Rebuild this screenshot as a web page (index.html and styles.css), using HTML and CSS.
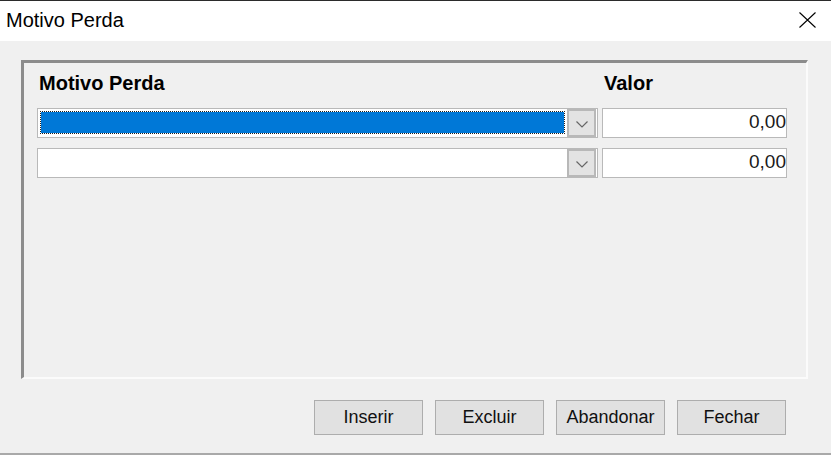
FILE: index.html
```html
<!DOCTYPE html>
<html lang="pt">
<head>
<meta charset="utf-8">
<title>Motivo Perda</title>
<link rel="stylesheet" href="styles.css">
</head>
<body>
<div class="window">
  <div class="titlebar">
    <span class="title">Motivo Perda</span>
    <svg class="close" width="17" height="16" viewBox="0 0 17 16" aria-hidden="true">
      <path d="M0.5 0.5 L16.5 15.5 M16.5 0.5 L0.5 15.5" stroke="#000" stroke-width="1.1" fill="none"/>
    </svg>
  </div>
  <div class="content">
    <div class="panel">
      <div class="grid head">
        <div class="hcell">Motivo Perda</div>
        <div class="hcell">Valor</div>
      </div>
      <div class="grid row first">
        <div class="combo">
          <div class="combo-field"><div class="sel"></div></div>
          <div class="combo-btn">
            <svg width="12" height="7" viewBox="0 0 12 7"><polyline points="0.5,0.5 6,6 11.5,0.5" fill="none" stroke="#666" stroke-width="1.2"/></svg>
          </div>
        </div>
        <div class="num">0,00</div>
      </div>
      <div class="grid row">
        <div class="combo">
          <div class="combo-field"></div>
          <div class="combo-btn">
            <svg width="12" height="7" viewBox="0 0 12 7"><polyline points="0.5,0.5 6,6 11.5,0.5" fill="none" stroke="#666" stroke-width="1.2"/></svg>
          </div>
        </div>
        <div class="num">0,00</div>
      </div>
    </div>
    <div class="buttons">
      <button class="btn">Inserir</button>
      <button class="btn">Excluir</button>
      <button class="btn">Abandonar</button>
      <button class="btn">Fechar</button>
    </div>
  </div>
</div>
</body>
</html>
```

FILE: styles.css
```css
* { box-sizing: border-box; }
html, body { margin: 0; padding: 0; }
body {
  width: 831px;
  height: 455px;
  overflow: hidden;
  font-family: "Liberation Sans", Arial, sans-serif;
  color: #000;
  background: #f0f0f0;
}
.window {
  display: flex;
  flex-direction: column;
  height: 455px;
  border-top: 1px solid #2b2b2b;
}
.titlebar {
  height: 40px;
  background: #fff;
  display: flex;
  justify-content: space-between;
  align-items: flex-start;
  padding: 8px 15px 0 6px;
}
.title {
  font-size: 20px;
  line-height: 23px;
}
.close {
  margin-top: 3px;
}
.content {
  flex: 1;
  background: #f0f0f0;
  padding: 19px 23px 0 21px;
  border-bottom: 2px solid #a9a9a9;
}
.panel {
  height: 319px;
  border-style: solid;
  border-width: 3px 2px 2px 3px;
  border-color: #8c8c8c #fbfbfb #fbfbfb #8c8c8c;
  padding: 10px 0 0 13px;
}
.grid {
  display: grid;
  grid-template-columns: 561px 185px;
  column-gap: 4px;
}
.hcell {
  font-weight: bold;
  font-size: 20px;
  line-height: 20px;
  padding-left: 2px;
}
.row {
  height: 30px;
  margin-top: 10px;
}
.row.first {
  margin-top: 15px;
}
.combo {
  display: flex;
  background: #fff;
  border: 1px solid #b9b9b9;
  padding: 0 1px 0 2px;
  gap: 2px;
}
.combo-field {
  flex: 1;
  padding: 2px 0 3px;
}
.sel {
  height: 100%;
  background: #0078d7;
  background-clip: padding-box;
  border: 1px dotted #1e1e1e;
}
.combo-btn {
  width: 29px;
  background: #e3e3e3;
  border: 2px solid #b8b8b8;
  display: flex;
  align-items: center;
  justify-content: center;
  padding-top: 2px;
}
.num {
  background: #fff;
  border: 1px solid #b9b9b9;
  font-size: 19px;
  line-height: 22px;
  text-align: right;
  padding: 2px 0 0 0;
  color: #1a1a1a;
}
.buttons {
  display: flex;
  justify-content: flex-end;
  gap: 12px;
  margin-top: 21px;
  padding-right: 22px;
}
.btn {
  width: 109px;
  height: 35px;
  background: #e1e1e1;
  border: 1px solid #adadad;
  font-family: "Liberation Sans", Arial, sans-serif;
  font-size: 18px;
  color: #111;
  padding: 0;
}
```
